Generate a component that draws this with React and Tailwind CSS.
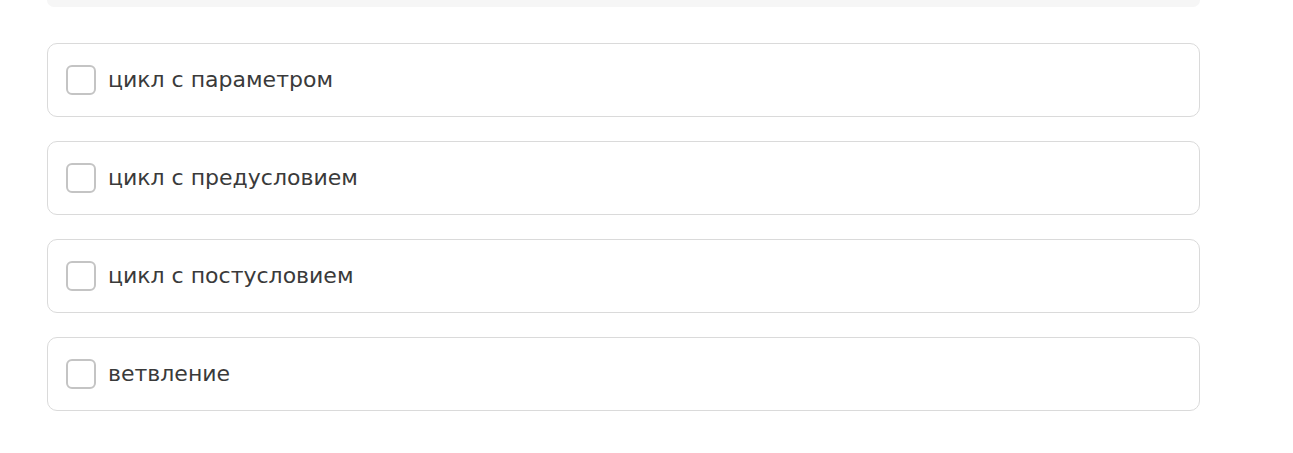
export default function App() {
  const options = [
    "цикл с параметром",
    "цикл с предусловием",
    "цикл с постусловием",
    "ветвление",
  ];

  return (
    <div className="min-h-screen bg-white pl-[47px] pt-0" style={{ fontFamily: "'DejaVu Sans', 'Noto Sans', sans-serif" }}>
      <div className="w-[1153px]">
        {/* bottom of the previous panel */}
        <div className="h-[7px] rounded-b-[10px] bg-[#f6f6f6]" />

        <div className="mt-[36px] flex flex-col gap-[24px]">
          {options.map((label, i) => (
            <label
              key={i}
              className="flex h-[74px] cursor-pointer items-center gap-[12px] rounded-[10px] border border-[#dadada] bg-white px-[18px]"
            >
              <span className="h-[30px] w-[30px] shrink-0 rounded-[6px] border-2 border-[#c4c4c4] bg-white" />
              <span className="text-[22px] leading-none text-[#3a3a3a]">{label}</span>
            </label>
          ))}
        </div>
      </div>
    </div>
  );
}
